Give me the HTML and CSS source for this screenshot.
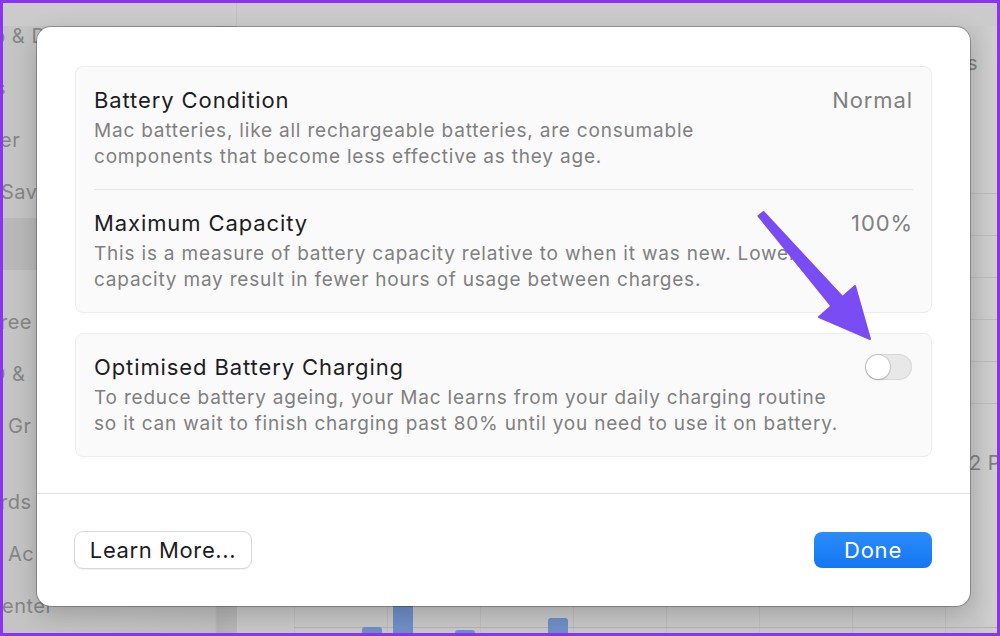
FILE: index.html
```html
<!DOCTYPE html>
<html lang="en">
<head>
<meta charset="utf-8">
<title>Battery Health</title>
<link rel="stylesheet" href="styles.css">
</head>
<body>
<div class="frame">
  <div class="app">
    <div class="topbar">
      <div class="tb-left"></div>
      <div class="tb-right"></div>
    </div>
    <div class="main">
      <aside class="sidebar">
        <div class="sb-item sb-first ind-p">p &amp; D</div>
        <div class="sb-item ind-s">s</div>
        <div class="sb-item ind-er">er</div>
        <div class="sb-item ind-sav">Sav</div>
        <div class="sb-item sb-active"></div>
        <div class="sb-gap-a"></div>
        <div class="sb-item ind-ree">ree</div>
        <div class="sb-item ind-d">D &amp;</div>
        <div class="sb-item ind-gr">Gr</div>
        <div class="sb-gap-b"></div>
        <div class="sb-item ind-rds">rds</div>
        <div class="sb-item ind-gr">Ac</div>
        <div class="sb-item ind-enter">enter</div>
      </aside>
      <main class="pane">
        <div class="pane-head">s</div>
        <div class="pane-gap"></div>
        <div class="pane-rows">
          <div class="pane-row"></div>
          <div class="pane-row"></div>
          <div class="pane-row"></div>
          <div class="pane-row"></div>
          <div class="pane-row"></div>
        </div>
        <div class="pane-label">2 PM</div>
        <div class="chart">
          <div class="slot"></div>
          <div class="slot"></div>
          <div class="slot"><div class="bar" style="height:6px"></div></div>
          <div class="slot"><div class="bar" style="height:60px"></div></div>
          <div class="slot"></div>
          <div class="slot"><div class="bar" style="height:3px"></div></div>
          <div class="slot"></div>
          <div class="slot"></div>
          <div class="slot"><div class="bar" style="height:15px"></div></div>
        </div>
      </main>
    </div>
  </div>

  <div class="dialog">
    <div class="dialog-body">
      <section class="group">
        <div class="row">
          <div class="row-text">
            <div class="row-title">Battery Condition</div>
            <div class="row-desc">Mac batteries, like all rechargeable batteries, are consumable components that become less effective as they age.</div>
          </div>
          <div class="row-value">Normal</div>
        </div>
        <div class="row-sep"></div>
        <div class="row">
          <div class="row-text">
            <div class="row-title">Maximum Capacity</div>
            <div class="row-desc">This is a measure of battery capacity relative to when it was new. Lower capacity may result in fewer hours of usage between charges.</div>
          </div>
          <div class="row-value">100%</div>
        </div>
      </section>
      <section class="group">
        <div class="row row-toggle">
          <div class="row-text">
            <div class="row-title">Optimised Battery Charging</div>
            <div class="row-desc">To reduce battery ageing, your Mac learns from your daily charging routine so it can wait to finish charging past 80% until you need to use it on battery.</div>
          </div>
          <div class="toggle"><div class="knob"></div></div>
        </div>
      </section>
    </div>
    <div class="dialog-footer">
      <button class="btn btn-secondary">Learn More...</button>
      <button class="btn btn-primary">Done</button>
    </div>
  </div>

  <svg class="arrow" viewBox="0 0 1000 636" width="1000" height="636" aria-hidden="true">
    <polygon points="763.5,212 842.5,297 855,286 870,339 819,317 831.5,306 758.5,216" fill="#7a4cf3" stroke="#7a4cf3" stroke-width="2" stroke-linejoin="round"/>
  </svg>
</div>
</body>
</html>
```

FILE: styles.css
```css
* { box-sizing: border-box; }
html, body { margin: 0; padding: 0; }
body { font-family: Inter, "Noto Sans", sans-serif; }

.frame {
  position: relative;
  width: 1000px;
  height: 636px;
  border: 3px solid #8b34f0;
  overflow: hidden;
  background: #c6c6c6;
}

.app {
  display: flex;
  flex-direction: column;
  height: 100%;
  overflow: hidden;
}

.topbar { height: 23px; display: flex; flex-shrink: 0; }
.tb-left { width: 234px; background: #cbcbcb; border-right: 1px solid #c1c1c1; }
.tb-right { flex: 1; background: #cbcbcb; }

.main { flex: 1; display: flex; min-height: 0; }

.sidebar {
  width: 234px;
  flex-shrink: 0;
  overflow: hidden;
  background: linear-gradient(to right, #c4c4c4 0, #c0c0c0 212px, #b2b2b2 214px, #b7b7b7 234px);
  font-size: 20px;
  letter-spacing: 0.5px;
  color: #858585;
}
.sb-item { height: 52px; line-height: 52px; white-space: nowrap; }
.sb-first { height: 36px; line-height: 20px; }
.sb-active { background: #b8b8b8; }
.sb-gap-a { height: 26px; }
.sb-gap-b { height: 24px; }
.ind-p { text-indent: -10px; }
.ind-s { text-indent: -8px; }
.ind-er { text-indent: -3px; }
.ind-sav { text-indent: -2px; }
.ind-ree { text-indent: -3px; }
.ind-d { text-indent: -12px; }
.ind-gr { text-indent: 5px; }
.ind-rds { text-indent: -3px; }
.ind-enter { text-indent: -1px; }

.pane {
  flex: 1;
  display: flex;
  flex-direction: column;
  background: linear-gradient(to right, #c8c8c8 0, #c8c8c8 740px, #cfcfcf 760px);
  color: #7e7e7e;
  font-size: 20px;
  letter-spacing: 0.5px;
  overflow: hidden;
}
.pane-head { height: 74px; padding: 27px 19px 0 0; line-height: 20px; text-align: right; }
.pane-gap { height: 93px; }
.pane-rows { border-bottom: 1px solid #bbbbbb; }
.pane-row { height: 42px; border-top: 1px solid #bbbbbb; }
.pane-label { padding: 49px 0 0 732px; line-height: 20px; white-space: nowrap; }

.chart {
  flex: 1;
  display: flex;
  align-items: flex-end;
  padding-left: 57px;
  background:
    linear-gradient(#b3b3b3, #b3b3b3) 0 calc(100% - 5px) / 100% 1px no-repeat,
    repeating-linear-gradient(to right, #bdbdbd 0 1px, transparent 1px 93px);
  background-origin: content-box;
  background-clip: content-box;
}
.slot {
  width: 31px;
  height: 100%;
  display: flex;
  align-items: flex-end;
  justify-content: center;
}
.bar {
  width: 20px;
  background: #6f8fc7;
  border-radius: 3px 3px 0 0;
}

/* dialog overlay */
.dialog {
  position: absolute;
  left: 34px;
  top: 24px;
  width: 933px;
  height: 579px;
  background: #ffffff;
  border-radius: 14px;
  box-shadow: 0 0 0 1px rgba(0, 0, 0, 0.26), 0 8px 24px rgba(0, 0, 0, 0.2);
  display: flex;
  flex-direction: column;
}
.dialog-body { height: 466px; padding: 39px 38px 0; flex-shrink: 0; }

.group {
  background: #fafafa;
  border: 1px solid #ededed;
  border-radius: 8px;
}
.group + .group { margin-top: 20px; }

.row { display: flex; gap: 30px; padding: 19px 19px 19px 18px; align-items: flex-start; }
.row-toggle { gap: 18px; }
.row-sep { height: 1px; background: #e7e7e7; margin: 0 18px; }
.row-text { flex: 1; min-width: 0; }
.row-title { font-size: 22px; line-height: 28px; letter-spacing: 0.9px; color: #1d1d1f; margin-bottom: 4px; }
.row-desc { font-size: 19px; line-height: 26px; letter-spacing: 0.8px; color: #808080; }
.row-value { font-size: 22px; line-height: 28px; letter-spacing: 0.9px; color: #808080; white-space: nowrap; margin-right: -1px; }

.toggle {
  width: 47px;
  height: 26px;
  margin-top: 1px;
  flex-shrink: 0;
  border-radius: 13px;
  background: #e8e8e8;
  box-shadow: inset 0 0 0 1px rgba(0, 0, 0, 0.07);
  padding: 1px;
}
.knob {
  width: 24px;
  height: 24px;
  border-radius: 50%;
  background: #ffffff;
  box-shadow: 0 0 0 1px rgba(0, 0, 0, 0.1), 0 1px 2px rgba(0, 0, 0, 0.18);
}

.dialog-footer {
  flex: 1;
  border-top: 1px solid #e4e4e4;
  padding: 37px 38px 0 37px;
  display: flex;
  justify-content: space-between;
  align-items: flex-start;
}
.btn {
  font-family: inherit;
  font-size: 22px;
  letter-spacing: 0.6px;
  padding: 0;
  cursor: default;
}
.btn-secondary {
  width: 178px;
  height: 38px;
  border: 1px solid #d7d7d7;
  border-radius: 9px;
  background: #ffffff;
  box-shadow: 0 1px 1px rgba(0, 0, 0, 0.06);
  color: #1d1d1f;
}
.btn-primary {
  width: 118px;
  height: 36px;
  margin-top: 1px;
  border: none;
  border-radius: 8px;
  background: linear-gradient(#2b8cfb, #1476f2);
  color: #ffffff;
  letter-spacing: 0.8px;
}

.arrow {
  position: absolute;
  left: -3px;
  top: -3px;
  pointer-events: none;
}
```
